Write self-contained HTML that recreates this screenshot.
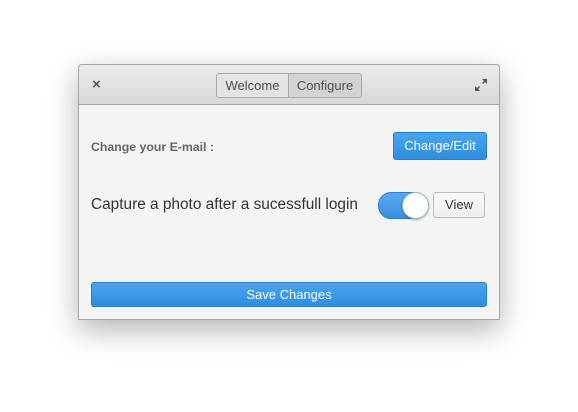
<!DOCTYPE html>
<html><head><style>
body{margin:0;width:578px;height:412px;background:#fff;font-family:"Liberation Sans",sans-serif;position:relative;overflow:hidden}
.win{position:absolute;left:78px;top:64px;width:420px;height:254px;border:1px solid #a8a8a8;border-radius:4px 4px 0 0;background:#f4f4f4;box-shadow:0 10px 30px rgba(0,0,0,.3);overflow:hidden}
.hdr{position:absolute;left:0;top:0;width:100%;height:39px;background:linear-gradient(#ececec,#d8d8d8);border-bottom:1px solid #a9a9a9}
.tabs{position:absolute;left:137px;top:8px;height:23px;display:flex;border:1px solid #a9a9a9;border-radius:3px;overflow:hidden;font-size:13px;color:#4d4d4d}
.tabs div{line-height:23px;text-align:center}
.abs{position:absolute}
.btn{position:absolute;border-radius:3px;font-size:13px;text-align:center}
.blue{background:linear-gradient(#4aa5ee,#2f8ee0);border:1px solid #2a7fcf;color:#fff}
</style></head><body>
<div class="win">
 <div class="hdr">
  <div class="abs" style="left:13px;top:11px;font-size:15px;font-weight:bold;color:#555">×</div>
  <div class="tabs"><div style="width:71px;background:#e4e4e4;border-right:1px solid #a9a9a9">Welcome</div><div style="width:72px;background:#d3d3d3">Configure</div></div>
  <svg class="abs" style="left:395px;top:13px" width="14" height="14" viewBox="0 0 14 14"><path d="M8 1h5v5l-2-2-2 2-1-1 2-2zM6 13H1V8l2 2 2-2 1 1-2 2z" fill="#555"/></svg>
 </div>
 <div class="abs" style="left:12px;top:75px;font-size:12.3px;font-weight:bold;color:#666">Change your E-mail :</div>
 <div class="btn blue" style="left:314px;top:67px;width:92px;height:26px;line-height:26px">Change/Edit</div>
 <div class="abs" style="left:12px;top:131px;font-size:15.4px;color:#333">Capture a photo after a sucessfull login</div>
 <div class="abs" style="left:299px;top:127px;width:48px;height:25px;border-radius:13px;background:linear-gradient(#5aaaf0,#3a8fe0);border:1px solid #2a7fcf"></div>
 <div class="abs" style="left:323px;top:127px;width:25px;height:25px;border-radius:50%;background:#fff;border:1px solid #9bb;box-shadow:0 1px 2px rgba(0,0,0,.3)"></div>
 <div class="btn" style="left:354px;top:127px;width:50px;height:24px;line-height:24px;background:linear-gradient(#fafafa,#eee);border:1px solid #bbb;color:#333">View</div>
 <div class="btn blue" style="left:12px;top:217px;width:394px;height:23px;line-height:23px">Save Changes</div>
</div>
</body></html>
